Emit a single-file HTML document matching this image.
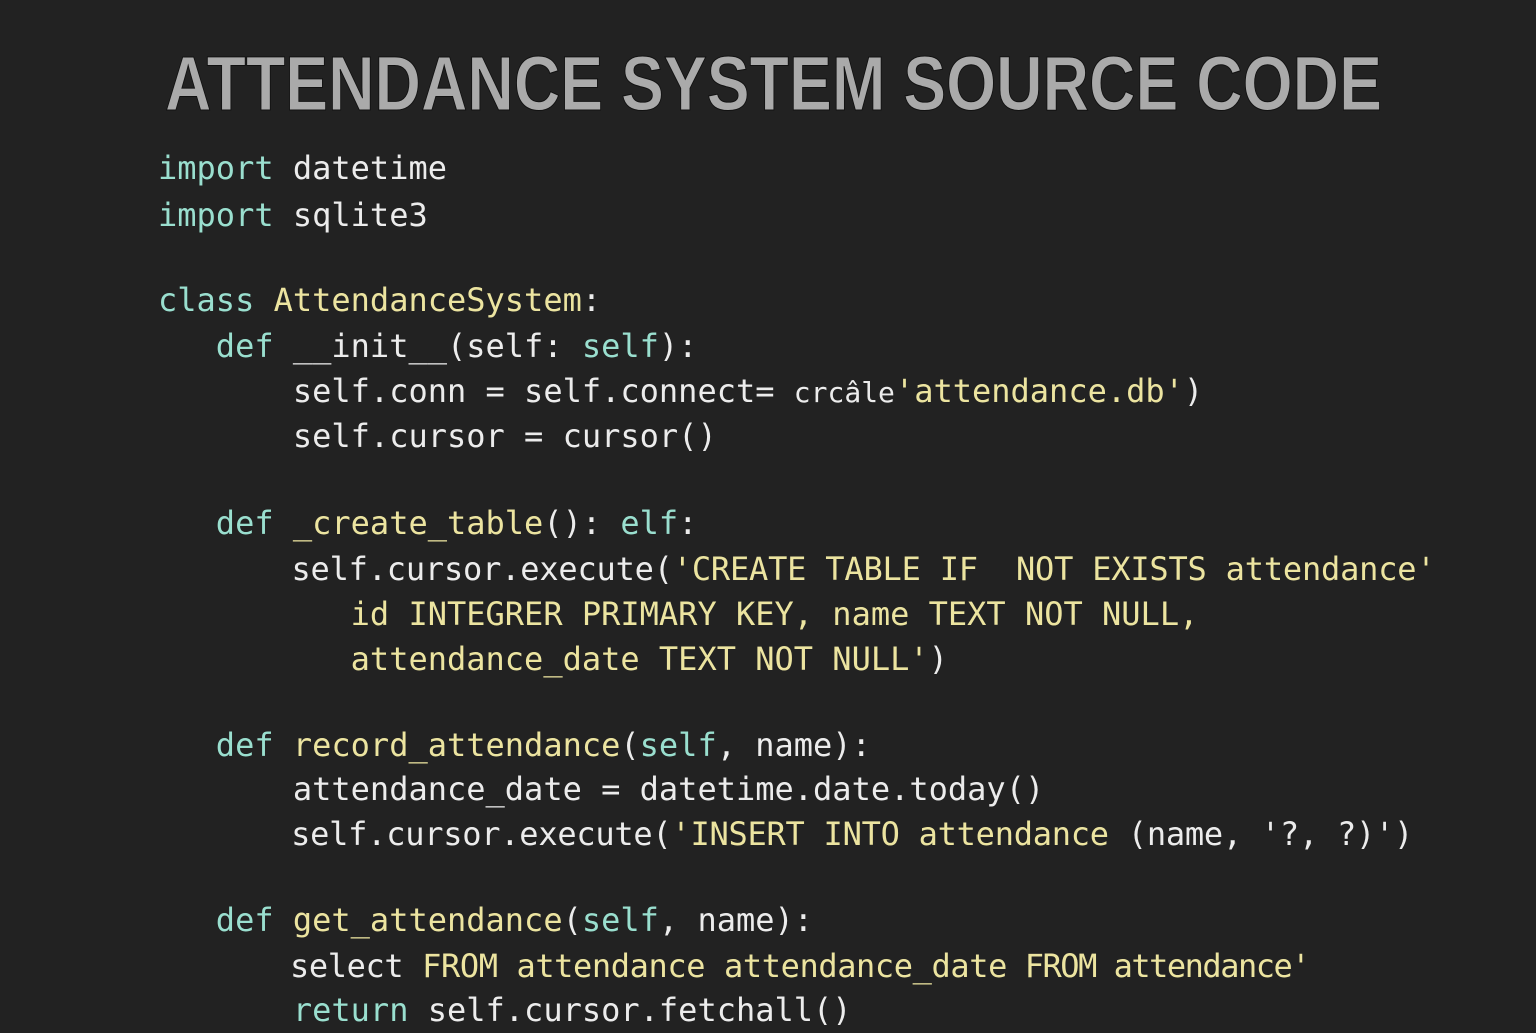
<!DOCTYPE html>
<html><head><meta charset="utf-8"><style>
html,body{margin:0;padding:0;width:1536px;height:1024px;overflow:hidden;background:#222222;}
.l{position:absolute;left:158px;height:45px;line-height:45px;font-family:"DejaVu Sans Mono","Liberation Mono",monospace;font-size:32px;color:#ececec;white-space:pre;}
.k{color:#9adfcf}.y{color:#ece4a0}
</style></head><body>
<svg style="position:absolute;left:0;top:0" width="1536" height="140">
<text x="165" y="110" textLength="1217" lengthAdjust="spacingAndGlyphs" font-family="Liberation Sans, sans-serif" font-weight="bold" font-size="77" fill="#aaaaaa" stroke="#111" stroke-width="1">ATTENDANCE SYSTEM SOURCE CODE</text>
</svg>
<div class="l" style="top:146px"><span class="k">import</span> datetime</div>
<div class="l" style="top:193px"><span class="k">import</span> sqlite3</div>
<div class="l" style="top:278px"><span class="k">class</span> <span class="y">AttendanceSystem</span>:</div>
<div class="l" style="top:324px">   <span class="k">def</span> __init__(self: <span class="k">self</span>):</div>
<div class="l" style="top:369px">       self.conn = self.connect= <span style="font-size:28px">crcâle</span><span class="y">'attendance.db'</span>)</div>
<div class="l" style="top:414px">       self.cursor = cursor()</div>
<div class="l" style="top:501px">   <span class="k">def</span> <span class="y">_create_table</span>(): <span class="k">elf</span>:</div>
<div class="l" style="top:547px;letter-spacing:-0.2px">       self.cursor.execute(<span class="y">'CREATE TABLE IF  NOT EXISTS attendance'</span></div>
<div class="l" style="top:592px">          <span class="y">id INTEGRER PRIMARY KEY, name TEXT NOT NULL,</span></div>
<div class="l" style="top:637px">          <span class="y">attendance_date TEXT NOT NULL'</span>)</div>
<div class="l" style="top:723px">   <span class="k">def</span> <span class="y">record_attendance</span>(<span class="k">self</span>, name):</div>
<div class="l" style="top:767px">       attendance_date = datetime.date.today()</div>
<div class="l" style="top:812px;letter-spacing:-0.25px">       self.cursor.execute(<span class="y">'INSERT INTO attendance</span> (name, '?, ?)')</div>
<div class="l" style="top:898px">   <span class="k">def</span> <span class="y">get_attendance</span>(<span class="k">self</span>, name):</div>
<div class="l" style="top:944px;letter-spacing:-0.4px">       select <span class="y">FROM attendance</span> <span class="y">attendance_date</span><span class="y" style="letter-spacing:-1.5px"> FROM attendance'</span></div>
<div class="l" style="top:988px">       <span class="k">return</span> self.cursor.fetchall()</div>
</body></html>
